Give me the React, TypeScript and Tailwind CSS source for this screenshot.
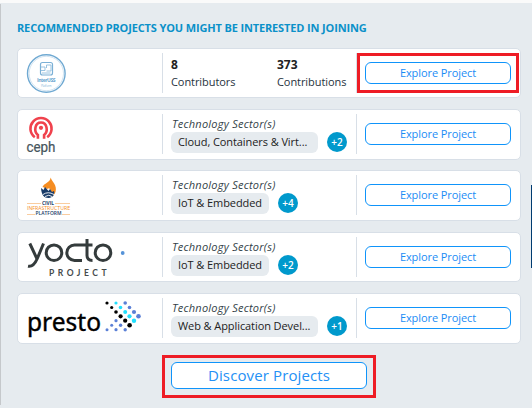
import React from "react";

function InterUssLogo() {
  return (
    <svg width="135" height="42" viewBox="26 51 135 42" fill="none" fontFamily="Open Sans, sans-serif">
      <circle cx="46.3" cy="72.5" r="18.8" stroke="#6fa9d2" strokeWidth="1.4" />
      <circle cx="46.3" cy="72.5" r="17.2" stroke="#b5d2e8" strokeWidth="0.6" />
      <rect x="40.5" y="61.5" width="12" height="12.5" rx="2" stroke="#7bb0d6" strokeWidth="1.2" />
      <path d="M41 66h4v3.500h-4M46.500 67v-3h4.500v6h-4.500M42 72h8.500" stroke="#8fbcdd" strokeWidth="0.900" />
      <text x="37" y="81.200" fontSize="5" fontWeight="700" fill="#6aa5d0" textLength="18.500">InterUSS</text>
      <text x="41" y="85.700" fontSize="3" fill="#8fbbdc" textLength="10.500">Platform</text>
    </svg>
  );
}

function CephLogo() {
  return (
    <svg width="135" height="42" viewBox="26 112 135 42" fill="none" fontFamily="Roboto, sans-serif">
      <g stroke="#f0424d" strokeWidth="2.600">
        <path d="M34.800 136.200A10.600 10.600 0 1 1 47.200 136.200" />
        <path d="M37.900 137.800V134C33.500 130.500 34.800 121.500 41 121.500S48.500 130.500 44.100 134V137.800" />
      </g>
      <circle cx="41" cy="126.800" r="2.100" fill="#f0424d" />
      <text x="26.500" y="151" fontSize="14" fontWeight="400" fill="#46555c" stroke="#46555c" strokeWidth="0.200" textLength="29" lengthAdjust="spacingAndGlyphs">ceph</text>
    </svg>
  );
}

function CivilLogo() {
  return (
    <svg width="135" height="42" viewBox="26 174 135 42" fontFamily="Open Sans, sans-serif">
      <path d="M50.700 177.500C52 182 57.500 185 55.500 192C54.500 195 52 197 49 197.500C54 192 50 190 49 188C47 190 46 188 42.500 187C44 183 50 183 50.700 177.500Z" fill="#f58d22" />
      <path d="M41 188L43.500 190L45 187L48.500 191L50 189L52 192L54 191C55 194 53 198 48.500 198S41.500 195 41 188Z" fill="#183b68" />
      <path d="M43 194.500Q48 191 54 194.500M45 196.500Q49 194 52 196.500" stroke="white" strokeWidth="0.900" fill="none" />
      <path d="M27 203.500h14M55 203.500h15M27 214.500h8M62 214.500h8" stroke="#f7b777" strokeWidth="0.700" />
      <g fontWeight="700">
        <text x="42" y="205" fontSize="5" fill="#183b68" textLength="12" lengthAdjust="spacingAndGlyphs">CIVIL</text>
        <text x="27" y="209.700" fontSize="4.700" fontWeight="400" fill="#f58d22" textLength="43" lengthAdjust="spacingAndGlyphs">INFRASTRUCTURE</text>
        <text x="35.500" y="214.800" fontSize="4.500" fontWeight="600" fill="#183b68" textLength="26" lengthAdjust="spacingAndGlyphs">PLATFORM</text>
      </g>
    </svg>
  );
}

function YoctoLogo() {
  return (
    <svg width="135" height="42" viewBox="26 236 135 42" fill="none" fontFamily="Lato, sans-serif">
      <g stroke="#343b3c" strokeWidth="3">
        <path d="M29.800 243.500L37.300 259.500M43.500 243.500L37.300 258.500C34.500 265 32 267 28 266.200" />
        <circle cx="54" cy="252.700" r="7.800" />
        <path d="M92.500 245H74.500A7.700 7.700 0 0 0 74.500 260.400H82M87 239V255.500C87 259 88.500 260.400 92.500 260.400" />
        <circle cx="103" cy="252.700" r="7.800" />
      </g>
      <circle cx="122.700" cy="253" r="1.900" fill="#5593d8" />
      <text x="49" y="275.800" fontSize="8.500" fontWeight="700" fill="#454b4c" textLength="57.500">PROJECT</text>
    </svg>
  );
}

const prestoDots: [number, number, number, string][] = [
  [107, 303, 1.6, "#000"], [116, 303, 1.6, "#22e0ff"], [125.200, 303, 1.8, "#5b80d6"],
  [111.700, 307.500, 1.6, "#000"], [120.500, 307.500, 1.8, "#22e0ff"], [129.500, 307.500, 1.8, "#5b80d6"],
  [116, 312, 1.8, "#000"], [125.200, 312, 2, "#22e0ff"], [134, 312, 2.1, "#5b80d6"],
  [120.600, 316.300, 2.1, "#000"], [129.500, 316.300, 2.1, "#22e0ff"], [138.500, 316.300, 2.3, "#5b80d6"],
  [116, 320.700, 1.6, "#5b80d6"], [125.200, 320.700, 2.1, "#000"], [134, 320.700, 2.2, "#22e0ff"],
  [111.700, 325.200, 1.5, "#5b80d6"], [120.600, 325.200, 1.7, "#5b80d6"], [129.600, 325.200, 2.3, "#000"],
  [107, 329.700, 1.5, "#5b80d6"], [116, 329.700, 1.6, "#5b80d6"], [125.200, 329.700, 1.7, "#5b80d6"],
];

function PrestoLogo() {
  return (
    <svg width="135" height="42" viewBox="26 297 135 42" fontFamily="Noto Sans, sans-serif">
      <text x="27" y="331" fontSize="26" fontWeight="400" fill="#000" stroke="#000" strokeWidth="0.400" textLength="74" lengthAdjust="spacingAndGlyphs">presto</text>
      {prestoDots.map(([x, y, r, color]) => (
        <circle key={`${x}-${y}`} cx={x} cy={y} r={r} fill={color} />
      ))}
    </svg>
  );
}

function ExploreButton() {
  return (
    <button className="flex h-[22px] w-[146px] items-center justify-center rounded-[6px] border border-[#0f94fa] bg-white pb-px text-[11px] leading-[15px] tracking-[-0.08px] text-[#1a8cf5]">
      Explore Project
    </button>
  );
}

function Sector({ label, more, wide }: { label: string; more: string; wide?: boolean }) {
  return (
    <div className="flex w-[193px] flex-col pl-2 pt-[6px]">
      <div className="h-4 whitespace-nowrap pl-px text-[11px] italic leading-[15px] tracking-[0.25px] text-[#333f48]">Technology Sector(s)</div>
      <div className="flex gap-[9px]">
        <span className={`${wide ? "w-[147px] tracking-[-0.08px]" : "w-[98px] tracking-[-0.08px]"} h-[21px] whitespace-nowrap rounded-[6px] bg-[#e6ebef] pl-[7px] text-[11px] leading-5 text-[#222]`}>{label}</span>
        <span className="flex size-5 items-center justify-center rounded-full bg-[#0099cc] text-[10px] font-semibold text-white">{more}</span>
      </div>
    </div>
  );
}

function Stat({ value, label }: { value: string; label: string }) {
  return (
    <div className="w-[106px] shrink-0 text-[11px] leading-[17px] text-[#222]">
      <div className="text-[12px] font-bold">{value}</div>
      <div className="whitespace-nowrap tracking-[-0.07px] text-[#26333d]">{label}</div>
    </div>
  );
}

function Card({ logo, children, tall, highlighted }: { logo: React.ReactNode; children: React.ReactNode; tall?: boolean; highlighted?: boolean }) {
  return (
    <div className={`${tall ? "h-[51px]" : "h-[50px]"} flex w-[504px] rounded-[5px] border border-[#d8dfe7] bg-white`}>
      <div className="w-[144px] overflow-hidden pl-2 pt-[3px]">{logo}</div>
      <div className="mt-1 h-10 w-px bg-[#d8dfe7]" />
      {children}
      <div className="mt-1 h-10 w-px bg-[#d8dfe7]" />
      <div className={`mt-1 h-10 w-[162px] ${highlighted ? "border-[3px] border-[#ee1c25] pl-[5px] pt-[6px]" : "pl-2 pt-[9px]"}`}>
        <ExploreButton />
      </div>
    </div>
  );
}

export default function App() {
  return (
    <div className="flex h-[408px] w-[532px] flex-col overflow-hidden bg-[#e6ebef] font-['Open_Sans',sans-serif]">
      <div className="h-[3px] shrink-0 bg-[#fafafa]" />
      <div className="flex h-[405px]">
        <div className="mt-px h-[401px] w-px bg-[#c5c8cb]" />
        <main className="w-[530px] pl-4">
          <h1 className="h-[45px] whitespace-nowrap pt-[17px] text-[11px] font-bold leading-4 tracking-[-0.14px] text-[#0b91c9]">
            RECOMMENDED PROJECTS YOU MIGHT BE INTERESTED IN JOINING
          </h1>
          <div className="flex flex-col">
            <Card logo={<InterUssLogo />} highlighted>
              <div className="flex w-[193px] pl-2 pt-[7px]">
                <Stat value="8" label="Contributors" />
                <Stat value="373" label="Contributions" />
              </div>
            </Card>
            <div className="h-[11px]" />
            <Card logo={<CephLogo />} tall><Sector label="Cloud, Containers & Virt..." more="+2" wide /></Card>
            <div className="h-[10px]" />
            <Card logo={<CivilLogo />} tall><Sector label="IoT & Embedded" more="+4" /></Card>
            <div className="h-[11px]" />
            <Card logo={<YoctoLogo />}><Sector label="IoT & Embedded" more="+2" /></Card>
            <div className="h-[11px]" />
            <Card logo={<PrestoLogo />} tall><Sector label="Web & Application Devel..." more="+1" wide /></Card>
          </div>
          <div className="ml-[145px] mt-[11px] flex h-[43px] w-[214px] border-[3px] border-[#ee1c25] pl-[6px] pt-1">
            <button className="flex h-[27px] w-[196px] items-center justify-center rounded-[6px] border border-[#0f94fa] bg-white pb-px text-[15px] leading-5 tracking-[0.12px] text-[#2490f5]">
              Discover Projects
            </button>
          </div>
        </main>
        <div className="mt-[182px] h-[83px] w-px bg-[#003b70]" />
      </div>
    </div>
  );
}
